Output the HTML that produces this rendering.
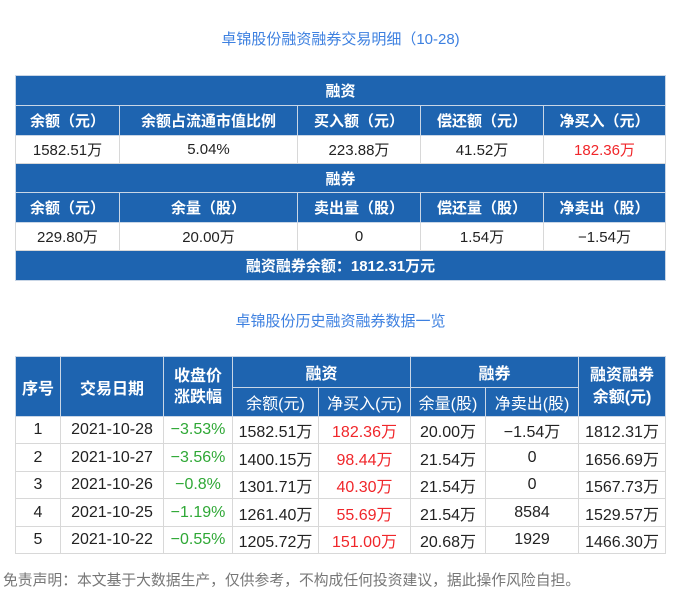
<!DOCTYPE html>
<html><head><meta charset="utf-8"><style>
body{margin:0;width:681px;height:610px;background:#fff;font-family:"Liberation Sans","Noto Sans CJK SC",sans-serif;position:relative;overflow:hidden}
.t{position:absolute;left:0;width:681px;text-align:center;color:#3d80e0;font-size:15px}
table{position:absolute;left:15px;border-collapse:collapse;table-layout:fixed}
td{border:1px solid #d8d8d8;text-align:center;font-size:15px;color:#222;padding:0;white-space:nowrap}
.h td,td.h{background:#1e64b0;color:#fff;font-weight:bold;border-color:#c9d6e6}
.b td{font-size:16px}
.r{color:#f0262a}.g{color:#2fa836}
</style></head><body>
<div class="t" style="top:28px">卓锦股份融资融券交易明细（10-28)</div>
<table style="top:75px;width:650px">
<colgroup><col style="width:104px"><col style="width:178px"><col style="width:123px"><col style="width:123px"><col style="width:122px"></colgroup>
<tr class="h" style="height:30px"><td colspan="5">融资</td></tr>
<tr class="h" style="height:30px"><td>余额（元）</td><td>余额占流通市值比例</td><td>买入额（元）</td><td>偿还额（元）</td><td>净买入（元）</td></tr>
<tr style="height:28px"><td>1582.51万</td><td>5.04%</td><td>223.88万</td><td>41.52万</td><td class="r">182.36万</td></tr>
<tr class="h" style="height:29px"><td colspan="5">融券</td></tr>
<tr class="h" style="height:30px"><td>余额（元）</td><td>余量（股）</td><td>卖出量（股）</td><td>偿还量（股）</td><td>净卖出（股）</td></tr>
<tr style="height:28px"><td>229.80万</td><td>20.00万</td><td>0</td><td>1.54万</td><td>−1.54万</td></tr>
<tr class="h" style="height:30px"><td colspan="5">融资融券余额：1812.31万元</td></tr>
</table>
<div class="t" style="top:310px">卓锦股份历史融资融券数据一览</div>
<table class="b" style="top:356px;width:650px">
<colgroup><col style="width:45px"><col style="width:103px"><col style="width:69px"><col style="width:86px"><col style="width:92px"><col style="width:75px"><col style="width:93px"><col style="width:87px"></colgroup>
<tr class="h" style="height:31px"><td rowspan="2">序号</td><td rowspan="2">交易日期</td><td rowspan="2" style="line-height:21px">收盘价<br>涨跌幅</td><td colspan="2">融资</td><td colspan="2">融券</td><td rowspan="2" style="line-height:22px">融资融券<br>余额(元)</td></tr>
<tr class="h" style="height:29px"><td style="font-weight:normal">余额(元)</td><td style="font-weight:normal">净买入(元)</td><td style="font-weight:normal">余量(股)</td><td style="font-weight:normal">净卖出(股)</td></tr>
<tr style="height:27px"><td>1</td><td>2021-10-28</td><td class="g">−3.53%</td><td>1582.51万</td><td class="r">182.36万</td><td>20.00万</td><td>−1.54万</td><td>1812.31万</td></tr>
<tr style="height:28px"><td>2</td><td>2021-10-27</td><td class="g">−3.56%</td><td>1400.15万</td><td class="r">98.44万</td><td>21.54万</td><td>0</td><td>1656.69万</td></tr>
<tr style="height:27px"><td>3</td><td>2021-10-26</td><td class="g">−0.8%</td><td>1301.71万</td><td class="r">40.30万</td><td>21.54万</td><td>0</td><td>1567.73万</td></tr>
<tr style="height:28px"><td>4</td><td>2021-10-25</td><td class="g">−1.19%</td><td>1261.40万</td><td class="r">55.69万</td><td>21.54万</td><td>8584</td><td>1529.57万</td></tr>
<tr style="height:27px"><td>5</td><td>2021-10-22</td><td class="g">−0.55%</td><td>1205.72万</td><td class="r">151.00万</td><td>20.68万</td><td>1929</td><td>1466.30万</td></tr>
</table>
<div style="position:absolute;left:3px;top:569px;font-size:14.8px;color:#777">免责声明：本文基于大数据生产，仅供参考，不构成任何投资建议，据此操作风险自担。</div>
</body></html>
